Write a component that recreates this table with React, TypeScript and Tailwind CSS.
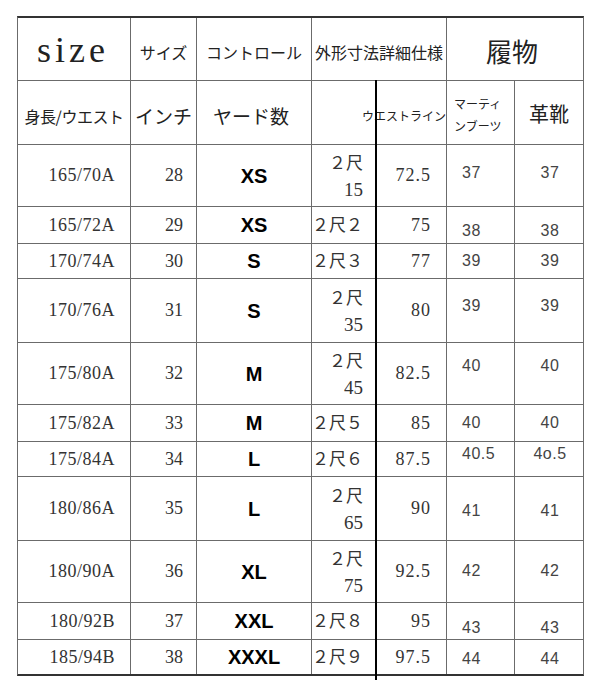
import { Fragment } from "react";

const jp = "font-['Noto_Sans_CJK_JP',sans-serif]";
const serif = "font-['Liberation_Serif','Noto_Sans_CJK_JP',serif]";
const sans = "font-['Liberation_Sans',Arial,sans-serif]";

type Row = {
  body: string;
  inch: string;
  size: string;
  shaku: string[];
  waist: string;
  boots: string;
  shoes: string;
  shift: string;
};

const rows: Row[] = [
  { body: "165/70A", inch: "28", size: "XS", shaku: ["２尺", "15"], waist: "72.5", boots: "37", shoes: "37", shift: "-translate-y-[3px]" },
  { body: "165/72A", inch: "29", size: "XS", shaku: ["２尺２"], waist: "75", boots: "38", shoes: "38", shift: "translate-y-[6px]" },
  { body: "170/74A", inch: "30", size: "S", shaku: ["２尺３"], waist: "77", boots: "39", shoes: "39", shift: "translate-y-0" },
  { body: "170/76A", inch: "31", size: "S", shaku: ["２尺", "35"], waist: "80", boots: "39", shoes: "39", shift: "-translate-y-[5px]" },
  { body: "175/80A", inch: "32", size: "M", shaku: ["２尺", "45"], waist: "82.5", boots: "40", shoes: "40", shift: "-translate-y-[8px]" },
  { body: "175/82A", inch: "33", size: "M", shaku: ["２尺５"], waist: "85", boots: "40", shoes: "40", shift: "translate-y-0" },
  { body: "175/84A", inch: "34", size: "L", shaku: ["２尺６"], waist: "87.5", boots: "40.5", shoes: "4o.5", shift: "-translate-y-[5px]" },
  { body: "180/86A", inch: "35", size: "L", shaku: ["２尺", "65"], waist: "90", boots: "41", shoes: "41", shift: "translate-y-[2px]" },
  { body: "180/90A", inch: "36", size: "XL", shaku: ["２尺", "75"], waist: "92.5", boots: "42", shoes: "42", shift: "-translate-y-[1px]" },
  { body: "180/92B", inch: "37", size: "XXL", shaku: ["２尺８"], waist: "95", boots: "43", shoes: "43", shift: "translate-y-[7px]" },
  { body: "185/94B", inch: "38", size: "XXXL", shaku: ["２尺９"], waist: "97.5", boots: "44", shoes: "44", shift: "translate-y-[2px]" },
];

const cell = "bg-white flex items-center";

export default function App() {
  return (
    <div className="w-[599px] h-[691px] bg-white pt-[16px] pl-[17px]">
      <div className="relative w-[567px]">
        <div className="grid grid-cols-[112px_65px_114px_64px_69px_67px_68px] grid-rows-[62px_63px_61px_36px_34px_63px_61px_36px_34px_63px_61px_36px_34px] gap-px bg-[#6b6b6b] border border-[#6b6b6b] border-t-2 border-t-[#333] border-b-2 border-b-[#333] text-[#222]">
          {/* header row 1 */}
          <div className={`${cell} justify-center pt-[2px] pr-[2px] ${serif} text-[36px] tracking-[4px]`}>size</div>
          <div className={`${cell} justify-center pt-[6px] ${jp} text-[16px]`}>サイズ</div>
          <div className={`${cell} justify-center pt-[6px] ${jp} text-[16px]`}>コントロール</div>
          <div className={`${cell} col-span-2 justify-center pt-[6px] ${jp} text-[16px]`}>外形寸法詳細仕様</div>
          <div className={`${cell} col-span-2 justify-center pt-[2px] pr-[6px] ${jp} text-[26px]`}>履物</div>

          {/* header row 2 */}
          <div className={`${cell} justify-center pt-[6px] ${jp} text-[16px] tracking-[-0.5px]`}>身長/ウエスト</div>
          <div className={`${cell} justify-center pt-[8px] ${jp} text-[19px]`}>インチ</div>
          <div className={`${cell} justify-center pt-[8px] pr-[6px] ${jp} text-[19px]`}>ヤード数</div>
          <div className={`${cell} col-span-2 justify-end pt-[6px] ${jp} text-[12px]`}>ウエストライン</div>
          <div className={`${cell} flex-col items-start justify-center pl-[7px] pt-[4px] ${jp} text-[12px] leading-[22px]`}>
            <span>マーティ</span>
            <span>ンブーツ</span>
          </div>
          <div className={`${cell} justify-center pt-[2px] ${jp} text-[20px]`}>革靴</div>

          {rows.map((r) => (
            <Fragment key={r.body}>
              <div className={`${cell} justify-end pr-[15px] ${serif} text-[18px] tracking-[0.5px] text-[#333]`}>{r.body}</div>
              <div className={`${cell} justify-end pr-[13px] ${serif} text-[18px] text-[#333]`}>{r.inch}</div>
              <div className={`${cell} justify-center ${sans} font-bold text-[20px] text-black`}>{r.size}</div>
              <div className={`${cell} flex-col items-end justify-center pr-[13px] pt-[2px] ${serif} text-[17px] leading-[26px] text-[#333]`}>
                {r.shaku.map((s, i) => (
                  <span key={s} className={i === 1 ? "text-[19px]" : ""}>
                    {s}
                  </span>
                ))}
              </div>
              <div className={`${cell} justify-end pr-[15px] ${serif} text-[18px] tracking-[1px] text-[#333]`}>{r.waist}</div>
              <div className={`${cell} justify-start pl-[15px] ${sans} text-[16px] tracking-[0.5px] text-[#444]`}>
                <span className={r.shift}>{r.boots}</span>
              </div>
              <div className={`${cell} justify-center pl-[2px] ${sans} text-[16px] tracking-[0.5px] text-[#444]`}>
                <span className={r.shift}>{r.shoes}</span>
              </div>
            </Fragment>
          ))}
        </div>

        {/* thick divider drawn over the waist columns */}
        <div className="absolute left-[358px] top-[64px] w-[2px] h-[600px] bg-black" />
      </div>
    </div>
  );
}
